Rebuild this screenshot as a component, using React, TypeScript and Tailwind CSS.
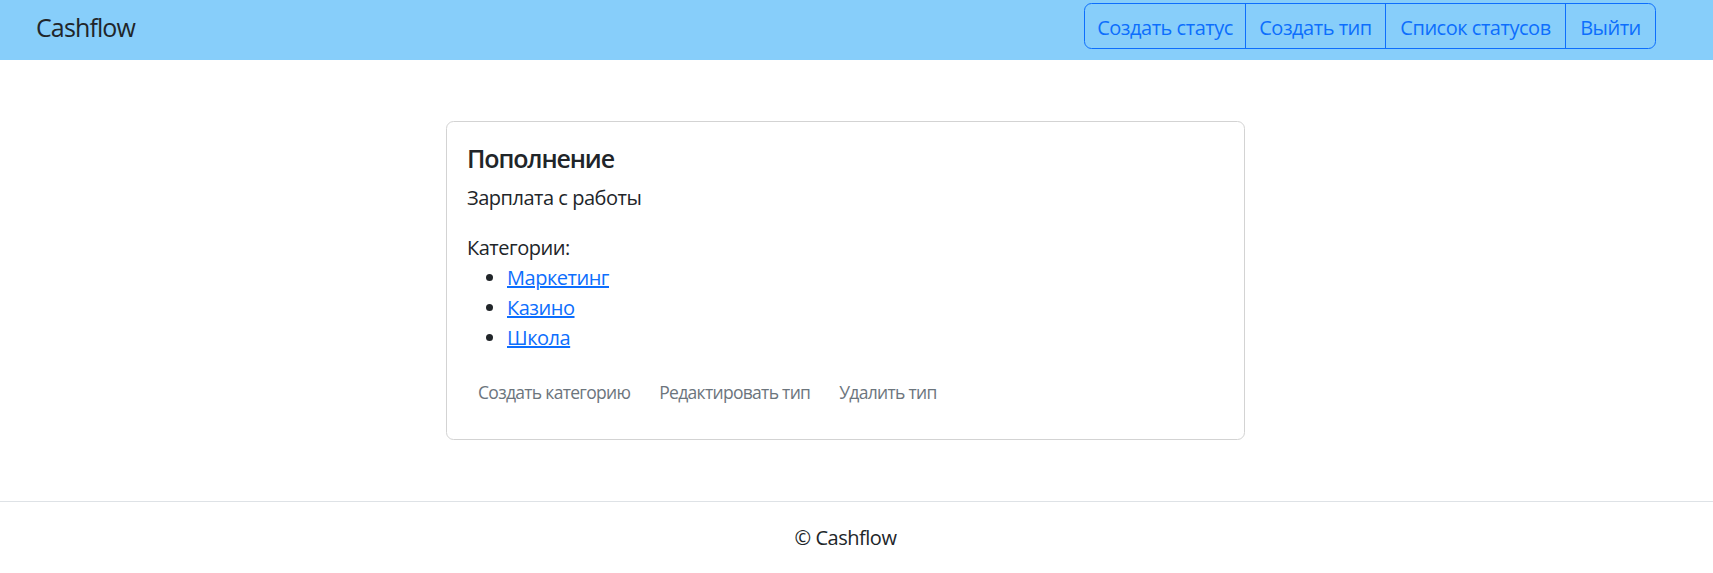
import React from "react";

export default function App() {
  const navItems = [
    { label: "Создать статус", w: "w-[161px]" },
    { label: "Создать тип", w: "w-[140px]" },
    { label: "Список статусов", w: "w-[180px]" },
    { label: "Выйти", w: "w-[89px]" },
  ];
  return (
    <div className="min-h-[573px] bg-white text-[#212529] font-['Open_Sans',sans-serif] tracking-[-0.03em]">
      <header className="h-[60px] bg-[#87cefa] flex items-start justify-between pl-[36px] pr-[57px]">
        <a href="#" className="pt-[12px] text-[25px] leading-[30px] text-[#212529] tracking-[-0.035em]">
          Cashflow
        </a>
        <div className="mt-[3px] h-[46px] flex border border-[#0d6efd] rounded-[7.5px] divide-x divide-[#0d6efd]">
          {navItems.map((it) => (
            <a
              key={it.label}
              href="#"
              className={`${it.w} h-full pt-[9px] text-center text-[20px] leading-[30px] text-[#0d6efd] whitespace-nowrap`}
            >
              {it.label}
            </a>
          ))}
        </div>
      </header>

      <main className="flex justify-center pr-[22px] pt-[61px] pb-[61px]">
        <div className="w-[799px] h-[319px] border border-[#d3d3d3] rounded-[7.5px] px-[20px] pt-[21px] pb-[19px]">
          <h5 className="text-[25px] leading-[30px] font-semibold mb-[10px] tracking-[-0.045em]">Пополнение</h5>
          <p className="text-[20px] leading-[30px] mb-[20px]">Зарплата с работы</p>
          <div className="text-[20px] leading-[30px]">Категории:</div>
          <ul className="list-disc pl-[40px] mb-[20px] text-[20px] leading-[30px]">
            <li>
              <a href="#" className="text-[#0d6efd] underline">Маркетинг</a>
            </li>
            <li>
              <a href="#" className="text-[#0d6efd] underline">Казино</a>
            </li>
            <li>
              <a href="#" className="text-[#0d6efd] underline">Школа</a>
            </li>
          </ul>
          <div className="flex gap-[7px]">
            {["Создать категорию", "Редактировать тип", "Удалить тип"].map((t) => (
              <a
                key={t}
                href="#"
                className="px-[10px] py-[5px] border border-transparent text-[17.5px] leading-[26.25px] text-[#6c757d] whitespace-nowrap tracking-[-0.04em]"
              >
                {t}
              </a>
            ))}
          </div>
        </div>
      </main>

      <footer className="border-t border-[#dee2e6] pt-[21px] pb-[20px] pr-[22px] text-center text-[20px] leading-[30px]">
        © Cashflow
      </footer>
    </div>
  );
}
